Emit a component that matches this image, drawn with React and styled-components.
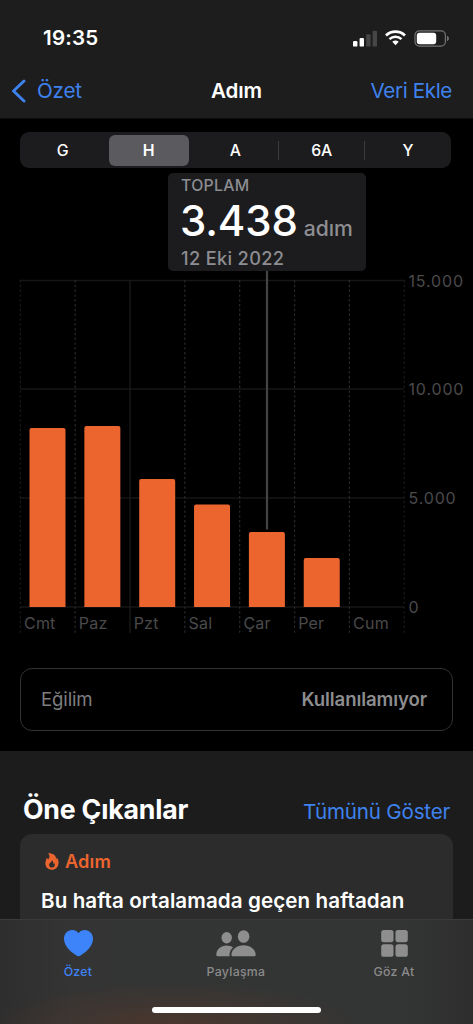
import React from "react";
import styled, { createGlobalStyle } from "styled-components";

const Global = createGlobalStyle`
  *, *::before, *::after { box-sizing: border-box; }
  body { margin: 0; background: #000; font-family: Inter, "Liberation Sans", sans-serif; }
  svg { display: block; flex: none; }
`;

const Screen = styled.div`
  width: 473px;
  height: 1024px;
  display: flex;
  flex-direction: column;
  overflow: hidden;
  background: #000;
  color: #fff;
`;

const Text = styled.span`
  font-size: ${(p) => p.$size}px;
  font-weight: ${(p) => p.$weight || 400};
  line-height: ${(p) => p.$line || 24}px;
  letter-spacing: ${(p) => p.$track || 0}px;
  color: ${(p) => p.$color || "#fff"};
  white-space: nowrap;
`;

const Header = styled.header`
  flex: none;
  height: 119px;
  background: #1d1d1d;
  border-bottom: 1px solid #0c0c0c;
`;

const StatusBar = styled.div`
  height: 64px;
  padding: 12px 23px 0 43px;
  display: flex;
  align-items: center;
  justify-content: space-between;
`;

const StatusIcons = styled.div`
  display: flex;
  align-items: center;
  gap: 8px;
`;

const NavBar = styled.nav`
  height: 54px;
  padding: 0 21px 0 11px;
  display: grid;
  grid-template-columns: 200px auto 1fr;
  align-items: center;
`;

const BackButton = styled.a`
  display: flex;
  align-items: center;
  gap: 11px;
`;

const NavAction = styled.a`
  display: flex;
  justify-content: flex-end;
`;

const Segmented = styled.div`
  flex: none;
  width: 431px;
  height: 36px;
  margin: 13px 0 0 20px;
  padding: 3px 0 2px;
  border-radius: 9px;
  background: #1c1c1e;
  display: grid;
  grid-template-columns: 85.5px repeat(3, 86.5px) 1fr;
`;

const Segment = styled.button`
  appearance: none;
  border: 0;
  padding: 0;
  margin: 0 3px;
  border-radius: 6px;
  font: ${(p) => (p.$active ? 600 : 500)} 15.8px/31px Inter, sans-serif;
  color: #fff;
  background: ${(p) => (p.$active ? "#5b5b5f" : "transparent")};
  display: flex;
  justify-content: center;
  position: relative;

  &::after {
    content: "";
    display: ${(p) => (p.$divider ? "block" : "none")};
    position: absolute;
    right: -3px;
    top: 6px;
    width: 1px;
    height: 19px;
    background: #3b3b3e;
  }
`;

const Callout = styled.div`
  flex: none;
  width: 198px;
  height: 98px;
  margin: 5px 0 0 168px;
  padding: 2px 0 0 13px;
  border-radius: 5px;
  background: #1c1c1e;
  display: flex;
  flex-direction: column;
`;

const CalloutValue = styled.div`
  display: flex;
  align-items: baseline;
  gap: 6px;
  height: 51px;
  margin-left: -1px;
`;

const TrendCard = styled.div`
  flex: none;
  width: 433px;
  height: 63px;
  margin: 28px 0 0 20px;
  padding: 0 25px 0 20px;
  border: 1.5px solid #323234;
  border-radius: 12px;
  display: flex;
  align-items: center;
  justify-content: space-between;
`;

const Highlights = styled.section`
  flex: none;
  height: 168px;
  margin-top: 20px;
  overflow: hidden;
  background: #1c1c1c;
  padding: 42px 20px 0;
`;

const SectionHead = styled.div`
  height: 41px;
  padding: 0 3px;
  display: flex;
  align-items: baseline;
  justify-content: space-between;
`;

const HighlightCard = styled.article`
  width: 433px;
  height: 120px;
  padding: 15px 21px;
  border-radius: 12px;
  background: #2c2c2c;
`;

const CardLabel = styled.div`
  display: flex;
  align-items: center;
  gap: 6px;
  padding-left: 4px;
  margin-bottom: 16px;
`;

const TabBar = styled.footer`
  flex: none;
  height: 105px;
  border-top: 1px solid #3b3b3b;
  background:
    radial-gradient(ellipse 190px 46px at 175px 108px, rgba(84, 56, 42, 0.75), transparent),
    linear-gradient(90deg, #2e2e2e, #343434 15%, #333535 55%, #333434 85%, #2e2e2e);
  display: flex;
  flex-direction: column;
  align-items: center;
  justify-content: space-between;
`;

const Tabs = styled.div`
  width: 475px;
  display: grid;
  grid-template-columns: repeat(3, 158px);
`;

const Tab = styled.a`
  display: flex;
  flex-direction: column;
  align-items: center;
`;

const TabIcon = styled.div`
  height: 43px;
  padding-top: 3px;
  display: flex;
  align-items: center;
`;

const HomeIndicator = styled.div`
  width: 169px;
  height: 6px;
  margin-bottom: 11px;
  border-radius: 3px;
  background: #fff;
`;

const BLUE = "#3f82ee";

const Signal = () => (
  <svg width="25" height="17" viewBox="0 0 25 17">
    <rect x="1" y="11" width="4.4" height="5.6" rx="1.2" fill="#fff" />
    <rect x="7.6" y="8" width="4.4" height="8.6" rx="1.2" fill="#fff" />
    <rect x="14.2" y="4.2" width="4.4" height="12.4" rx="1.2" fill="#464646" />
    <rect x="20.6" y=".8" width="4.4" height="15.8" rx="1.2" fill="#464646" />
  </svg>
);

const Wifi = () => (
  <svg width="21" height="16" viewBox="0 0 21 16" fill="none" stroke="#fff">
    <path d="M1 5.4C6.4 .3 14.6 .3 20 5.4" strokeWidth="2.7" />
    <path d="M4.5 9.1C8 6 13 6 16.5 9.1" strokeWidth="2.6" />
    <path d="M7.3 11.8C9.2 10.2 11.8 10.2 13.7 11.8L10.5 15.2Z" fill="#fff" stroke="none" />
  </svg>
);

const Battery = () => (
  <svg width="36" height="17" viewBox="0 0 36 17">
    <rect x="1" y=".9" width="30.4" height="15.2" rx="4.4" fill="none" stroke="#737373" strokeWidth="1.2" />
    <rect x="2.8" y="2.7" width="19.4" height="11.6" rx="2.7" fill="#fff" />
    <path d="M33 5.8C35.6 6.8 35.6 10.2 33 11.2Z" fill="#737373" />
  </svg>
);

const BackChevron = () => (
  <svg width="15" height="24" viewBox="0 0 15 24">
    <path d="M13 2L2.5 12L13 22" fill="none" stroke={BLUE} strokeWidth="2.9" strokeLinecap="round" strokeLinejoin="round" />
  </svg>
);

const Flame = () => (
  <svg width="14" height="17" viewBox="0 0 14 17">
    <path
      fillRule="evenodd"
      fill="#ec652f"
      d="M3.2 .4C7.7 .1 11.4 2.5 11 6.2C11.5 5.9 11.8 5.2 11.8 4.6C13.1 6.1 13.8 8.1 13.5 10.4C13.1 14.2 10.4 16.7 6.9 16.7C3.2 16.7 .5 14.4 .4 10.8C.3 8.5 1.4 7.2 1.5 5.1C2.4 5.4 2.9 5.9 3.2 6.5C4.8 4.6 5 2.2 3.2 .4ZM6.7 7.2C7.2 9.2 4.1 9.6 4.1 12C4.1 13.5 5.3 14.6 6.9 14.6C8.7 14.6 9.9 13.4 9.8 11.8C9.8 11 9.5 10.4 9 9.9C9 10.5 8.8 10.9 8.4 11.1C8.5 9.4 8 8 6.7 7.2Z"
    />
  </svg>
);

const Heart = () => (
  <svg width="29" height="27" viewBox="0 0 29 27">
    <path
      fill="#3d84fa"
      d="M14.5 3.2C13 1.1 10.8 0 8.2 0C3.7 0 0 3.5 0 8.8C0 16 6 21.4 12.4 25.5C13.8 26.4 15.2 26.4 16.6 25.5C23 21.4 29 16 29 8.8C29 3.5 25.3 0 20.8 0C18.2 0 16 1.1 14.5 3.2Z"
    />
  </svg>
);

const People = () => (
  <svg width="40" height="27" viewBox="0 0 40 27" fill="#8e8e8e">
    <ellipse cx="10.7" cy="7.8" rx="5.2" ry="5.7" />
    <path d="M2 26.2C.8 26.2 .2 25.6 .3 24.4C.6 19.5 5.1 15.6 10.6 15.6C13.2 15.6 15.3 16.3 17 17.5C14.8 19.4 13.6 21.8 13.5 24.5C13.5 25.1 13.6 25.7 13.8 26.2Z" />
    <ellipse cx="27.6" cy="6.5" rx="5.8" ry="6.3" />
    <path d="M17.2 26.2C15.9 26.2 15.3 25.5 15.4 24.4C15.8 19.2 21 15.2 27.6 15.2C34.2 15.2 39.3 19.2 39.7 24.4C39.8 25.5 39.2 26.2 38 26.2Z" />
  </svg>
);

const GridIcon = () => (
  <svg width="27" height="27" viewBox="0 0 27 27" fill="#8e8e8e">
    <rect x=".2" y="0" width="12.3" height="12.2" rx="2.6" />
    <rect x="14.5" y="0" width="12.3" height="12.2" rx="2.6" />
    <rect x=".2" y="14.3" width="12.3" height="12.5" rx="2.6" />
    <rect x="14.5" y="14.3" width="12.3" height="12.5" rx="2.6" />
  </svg>
);

const AxisLabel = styled.text`
  font-family: Inter, sans-serif;
  font-size: 16px;
  letter-spacing: ${(p) => p.$track || 0}px;
  fill: #4a4a4b;
`;

const DAYS = [
  { label: "Cmt", top: 157 },
  { label: "Paz", top: 155 },
  { label: "Pzt", top: 208 },
  { label: "Sal", top: 233.4 },
  { label: "Çar", top: 261 },
  { label: "Per", top: 287 },
  { label: "Cum" },
];

const TICKS = [
  { label: "15.000", y: 9.5 },
  { label: "10.000", y: 118 },
  { label: "5.000", y: 227 },
  { label: "0", y: 336 },
];

const STEP = 54.85;

const StepChart = () => (
  <svg width="473" height="369" viewBox="0 0 473 369">
    {TICKS.map((t) => (
      <React.Fragment key={t.label}>
        <line x1="20" x2="404" y1={t.y} y2={t.y} stroke="#161617" strokeWidth="1.3" />
        <AxisLabel x="408.5" y={t.y + 6} $track={0.85}>{t.label}</AxisLabel>
      </React.Fragment>
    ))}
    {[0, 1, 2, 3, 4, 5, 6, 7].map((i) => {
      const solid = i === 2;
      const edge = i === 0 || i === 7;
      return (
        <line
          key={i}
          x1={20.3 + i * STEP}
          x2={20.3 + i * STEP}
          y1="9"
          y2={362}
          stroke={solid ? "#1d1d1e" : edge ? "#1a1a1b" : "#29292a"}
          strokeWidth="1.2"
          strokeDasharray={solid ? undefined : "2.4 2.4"}
        />
      );
    })}
    <line x1="267" x2="267" y1="0" y2="258.5" stroke="#444446" strokeWidth="2.2" />
    {DAYS.map((d, i) => (
      <React.Fragment key={d.label}>
        {d.top && (
          <path
            fill="#ec652f"
            d={`M${29.5 + i * STEP} 336V${d.top + 2}q0-2 2-2h32q2 0 2 2V336Z`}
          />
        )}
        <AxisLabel x={24 + i * STEP} y="358.4" $track={0.2}>{d.label}</AxisLabel>
      </React.Fragment>
    ))}
  </svg>
);

const SEGMENTS = [
  { label: "G" },
  { label: "H", active: true },
  { label: "A", divider: true },
  { label: "6A", divider: true },
  { label: "Y" },
];

const TABS = [
  { label: "Özet", Icon: Heart, color: "#3d84fa" },
  { label: "Paylaşma", Icon: People, color: "#8a8a8a" },
  { label: "Göz At", Icon: GridIcon, color: "#8a8a8a" },
];

export default function App() {
  return (
    <Screen lang="tr">
      <Global />
      <Header>
        <StatusBar>
          <Text $size={20.6} $weight={600} $track={0.2}>19:35</Text>
          <StatusIcons>
            <Signal />
            <Wifi />
            <Battery />
          </StatusIcons>
        </StatusBar>
        <NavBar>
          <BackButton>
            <BackChevron />
            <Text $size={20.6} $track={-0.15} $color={BLUE}>Özet</Text>
          </BackButton>
          <Text $size={20.6} $weight={600} $track={-0.1}>Adım</Text>
          <NavAction>
            <Text $size={20.6} $track={-0.35} $color={BLUE}>Veri Ekle</Text>
          </NavAction>
        </NavBar>
      </Header>

      <Segmented>
        {SEGMENTS.map((s) => (
          <Segment key={s.label} $active={s.active} $divider={s.divider}>{s.label}</Segment>
        ))}
      </Segmented>

      <Callout>
        <Text $size={15.8} $weight={500} $line={21} $track={0.3} $color="#8d8d92">TOPLAM</Text>
        <CalloutValue>
          <Text $size={42} $weight={500} $line={50} $track={-0.15}>3.438</Text>
          <Text $size={21.2} $weight={500} $track={-0.1} $color="#8d8d92">adım</Text>
        </CalloutValue>
        <Text $size={18.2} $weight={500} $line={23} $track={0.35} $color="#8d8d92">12 Eki 2022</Text>
      </Callout>

      <StepChart />

      <TrendCard>
        <Text $size={18.6} $line={25} $track={-0.15} $color="#7e7e80">Eğilim</Text>
        <Text $size={18.6} $line={25} $weight={600} $track={-0.1} $color="#8d8d8f">Kullanılamıyor</Text>
      </TrendCard>

      <Highlights>
        <SectionHead>
          <Text $size={26.7} $weight={700} $line={32} $track={-0.2}>Öne Çıkanlar</Text>
          <Text $size={20.6} $track={-0.2} $color={BLUE}>Tümünü Göster</Text>
        </SectionHead>
        <HighlightCard>
          <CardLabel>
            <Flame />
            <Text $size={18.2} $weight={600} $track={0.15} $color="#ec652f">Adım</Text>
          </CardLabel>
          <Text $size={20.6} $weight={600} $track={0.09}>Bu hafta ortalamada geçen haftadan</Text>
        </HighlightCard>
      </Highlights>

      <TabBar>
        <Tabs>
          {TABS.map(({ label, Icon, color }) => (
            <Tab key={label}>
              <TabIcon><Icon /></TabIcon>
              <Text $size={12.3} $weight={500} $line={18} $track={0.3} $color={color}>{label}</Text>
            </Tab>
          ))}
        </Tabs>
        <HomeIndicator />
      </TabBar>
    </Screen>
  );
}
